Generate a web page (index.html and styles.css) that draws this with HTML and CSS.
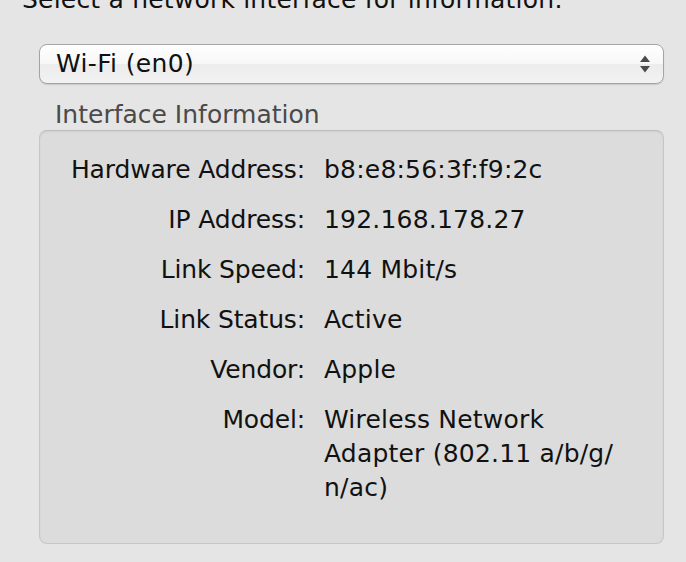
FILE: index.html
```html
<!DOCTYPE html>
<html>
<head>
<meta charset="utf-8">
<link rel="stylesheet" href="styles.css">
</head>
<body>
<div class="pane">
  <div class="prompt">Select a network interface for information:</div>
  <div class="popup">
    <span class="popup-label">Wi-Fi (en0)</span>
    <svg class="arrows" width="12" height="20" viewBox="0 0 12 20">
      <path d="M6 1.5 L11 8 L1 8 Z" fill="#4a4a4a"/>
      <path d="M6 18.5 L11 12 L1 12 Z" fill="#4a4a4a"/>
    </svg>
  </div>
  <div class="group-title">Interface Information</div>
  <div class="group">
    <div class="info">
      <div class="k">Hardware Address:</div><div class="v">b8:e8:56:3f:f9:2c</div>
      <div class="k">IP Address:</div><div class="v">192.168.178.27</div>
      <div class="k">Link Speed:</div><div class="v">144 Mbit/s</div>
      <div class="k">Link Status:</div><div class="v">Active</div>
      <div class="k">Vendor:</div><div class="v">Apple</div>
      <div class="k">Model:</div><div class="v">Wireless Network<br>Adapter (802.11 a/b/g/<br>n/ac)</div>
    </div>
  </div>
</div>
</body>
</html>
```
FILE: styles.css
```css
html, body {
  margin: 0;
  padding: 0;
  background: #e5e5e5;
  width: 686px;
  height: 562px;
  overflow: hidden;
}
.pane {
  font-family: "DejaVu Sans", sans-serif;
  font-size: 25px;
  letter-spacing: 0.2px;
  color: #111;
  padding: 0 22px 0 39px;
  margin-top: -15px;
}
.prompt {
  margin-left: -17px;
  height: 59px;
  line-height: 30px;
  white-space: nowrap;
}
.popup {
  box-sizing: border-box;
  height: 40px;
  border: 1px solid #a4a4a4;
  border-radius: 8px;
  background: linear-gradient(#ffffff 0%, #f7f7f7 50%, #ececec 51%, #f2f2f2 100%);
  box-shadow: 0 1px 1px rgba(0,0,0,0.12);
  display: flex;
  align-items: center;
  justify-content: space-between;
  padding: 0 12px 0 16px;
}
.popup-label {
  line-height: 38px;
  letter-spacing: 0.35px;
}
.arrows {
  display: block;
}
.group-title {
  color: #4a4a4a;
  padding-left: 16px;
  margin-top: 16px;
  height: 30px;
  line-height: 30px;
  letter-spacing: 0;
}
.group {
  box-sizing: border-box;
  height: 414px;
  border: 1px solid #c6c6c6;
  border-top-color: #bdbdbd;
  border-radius: 8px;
  background: #dcdcdc;
  box-shadow: inset 0 1px 2px rgba(0,0,0,0.06);
  padding: 22px 20px 0 0;
}
.info {
  display: grid;
  grid-template-columns: 265px 1fr;
  column-gap: 19px;
  row-gap: 16px;
  line-height: 34px;
}
.k {
  text-align: right;
  letter-spacing: -0.15px;
}
```
